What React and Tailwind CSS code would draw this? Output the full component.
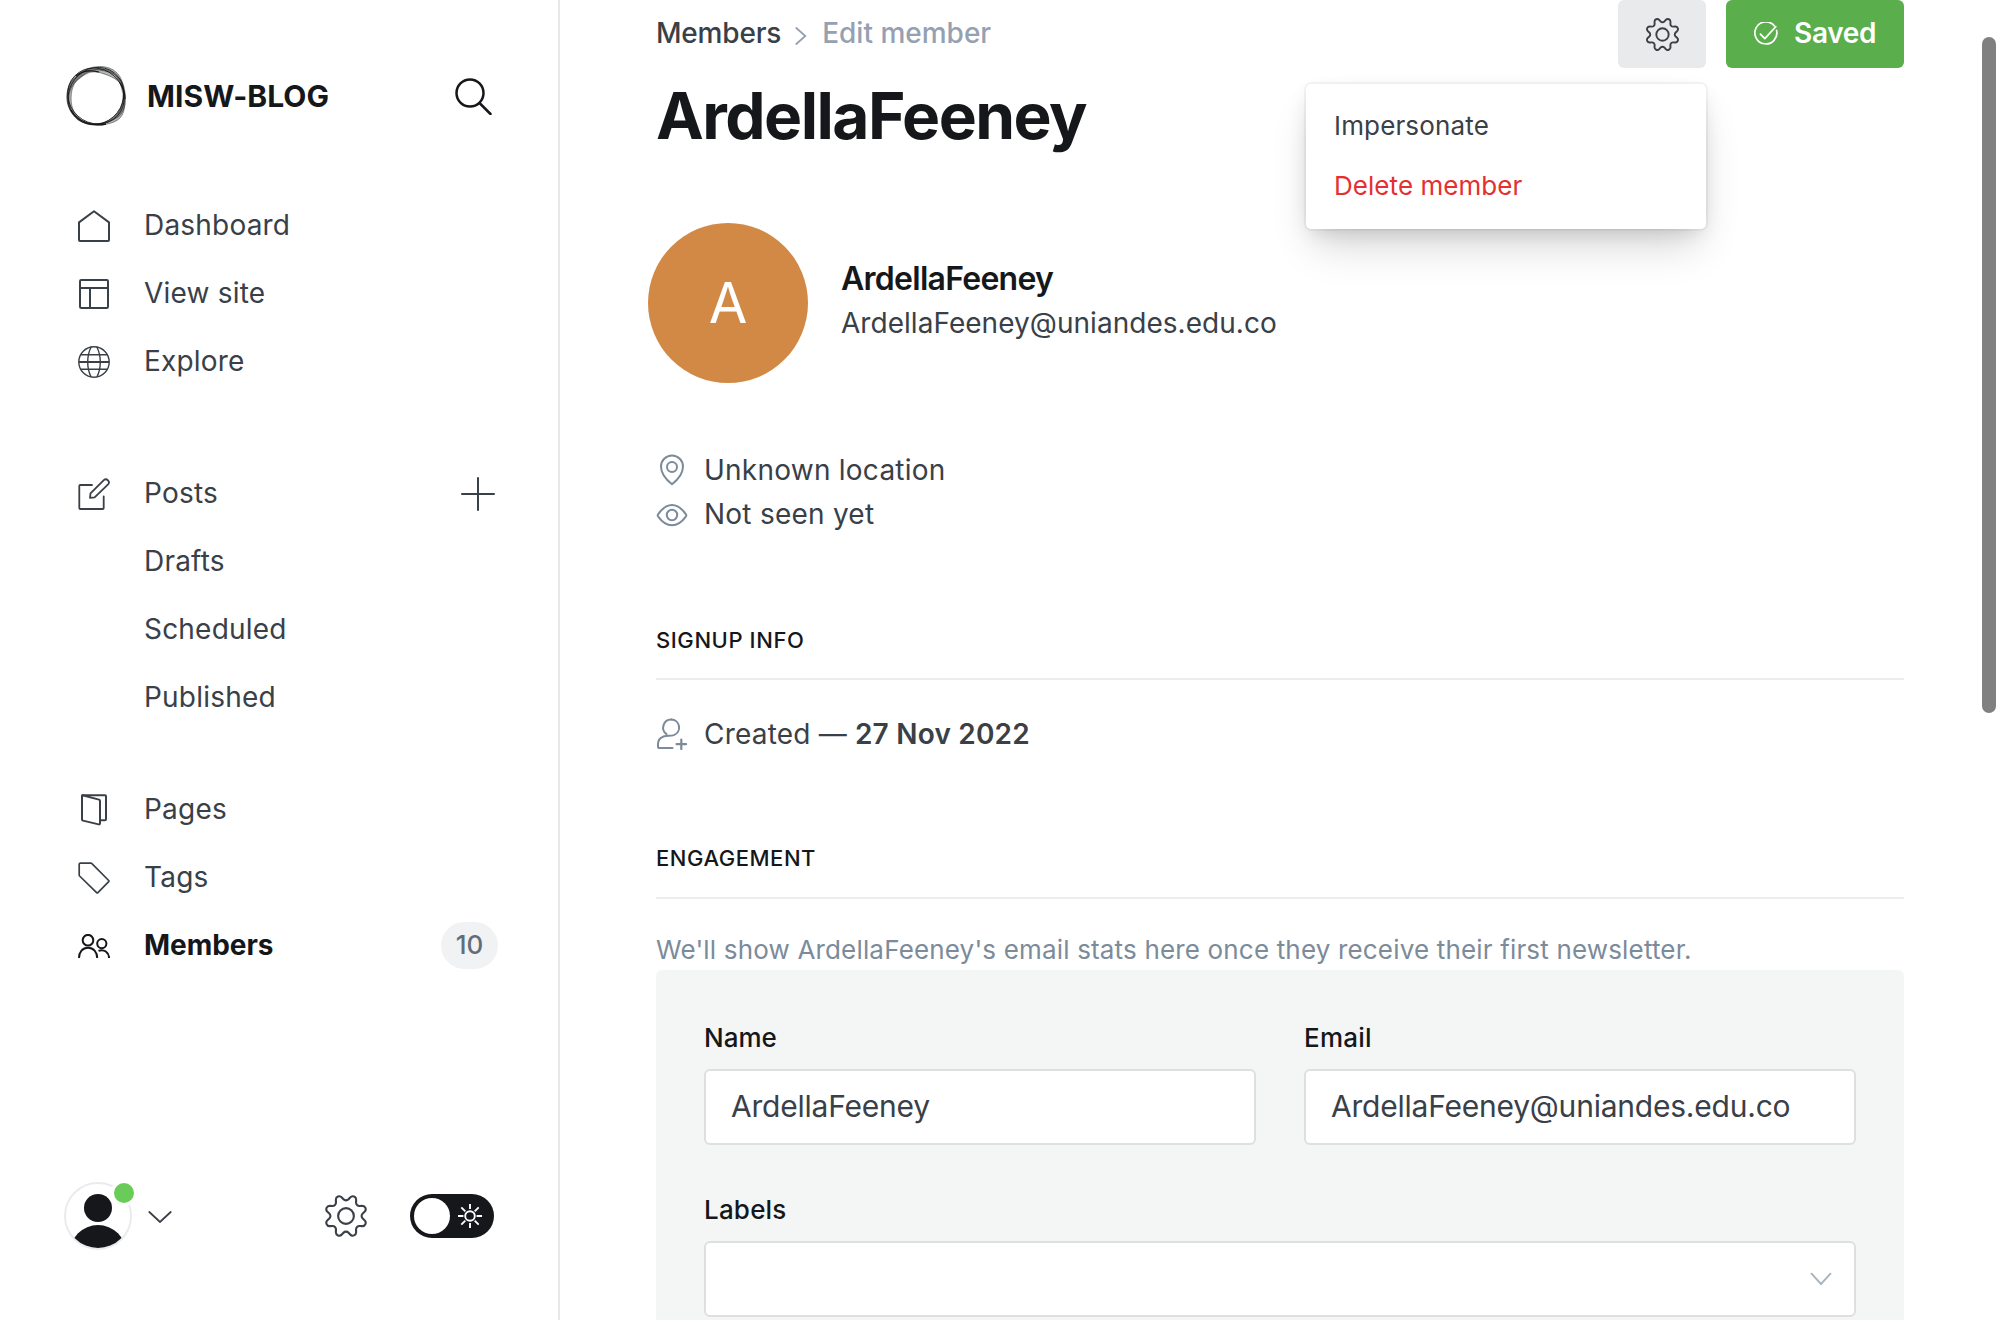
import React from "react";
import clsx from "clsx";

const GEAR =
  "M10.546,2.438a1.957,1.957,0,0,0,2.908,0L14.4,1.4a1.959,1.959,0,0,1,3.41,1.413l-.071,1.4A1.958,1.958,0,0,0,19.79,6.266l1.4-.071A1.959,1.959,0,0,1,22.6,9.606l-1.042.94a1.96,1.96,0,0,0,0,2.909l1.042.94a1.959,1.959,0,0,1-1.413,3.41l-1.4-.071a1.958,1.958,0,0,0-2.056,2.056l.071,1.4A1.959,1.959,0,0,1,14.4,22.6l-.941-1.041a1.959,1.959,0,0,0-2.908,0L9.606,22.6A1.959,1.959,0,0,1,6.2,21.192l.072-1.4a1.958,1.958,0,0,0-2.056-2.056l-1.4.071A1.958,1.958,0,0,1,1.4,14.4l1.041-.94a1.96,1.96,0,0,0,0-2.909L1.4,9.606A1.958,1.958,0,0,1,2.809,6.2l1.4.071A1.958,1.958,0,0,0,6.267,4.211L6.2,2.81A1.959,1.959,0,0,1,9.606,1.4Z";

function Svg({ w = 32, h = 32, sw = 2, className, children }) {
  return (
    <svg
      width={w}
      height={h}
      viewBox={`0 0 ${w} ${h}`}
      fill="none"
      stroke="currentColor"
      strokeWidth={sw}
      strokeLinecap="round"
      strokeLinejoin="round"
      className={clsx("shrink-0", className)}
    >
      {children}
    </svg>
  );
}

function Gear({ size, sw, r = 4.5 }) {
  return (
    <svg width={size} height={size} viewBox="0 0 24 24" fill="none" stroke="currentColor" strokeWidth={sw} strokeLinecap="round" strokeLinejoin="round">
      <path d={GEAR} />
      <circle cx="12" cy="12" r={r} />
    </svg>
  );
}

const icons = {
  home: (
    <Svg>
      <path d="M1 12.4 16 1.2l15 11.2V30a1 1 0 0 1-1 1H2a1 1 0 0 1-1-1z" />
    </Svg>
  ),
  site: (
    <Svg>
      <rect x="2" y="2" width="28" height="28" rx="1.2" />
      <path d="M2 10h28M12 10v20" strokeLinecap="butt" />
    </Svg>
  ),
  globe: (
    <Svg sw={1.4}>
      <circle cx="16" cy="16" r="15.2" />
      <path d="M13 1.2C8.6 10 8.6 22 13 30.8M19 1.2c4.400 8.800 4.400 20.800 0 29.600M2.600 8.800h26.800M2.600 23.200h26.800" />
      <path d="M1 16h30" strokeWidth="2" strokeLinecap="butt" />
    </Svg>
  ),
  posts: (
    <Svg sw={1.8}>
      <path d="M14 7H2.300a1 1 0 0 0-1 1v22a1 1 0 0 0 1 1h22.400a1 1 0 0 0 1-1V18.500" />
      <path d="M12 19.800l.5-4.400L25.800 2.100a3.050 3.050 0 0 1 4.300 4.300L16.600 19.300z" />
    </Svg>
  ),
  pages: (
    <Svg>
      <path d="M4.300 1.300H27a1 1 0 0 1 1 1v23a1 1 0 0 1-1 1h-4.400" />
      <path d="M4.600 1.300 21 5.600a1.400 1.400 0 0 1 1 1.300V29.400a1 1 0 0 1-1.300 1L5 26.600a1.300 1.300 0 0 1-1-1.200V2.200a.8.8 0 0 1 .6-.9z" />
    </Svg>
  ),
  tags: (
    <Svg sw={1.7}>
      <path d="M2.300 1.200h10.600a1.500 1.500 0 0 1 1 .4L30.700 18.500a1 1 0 0 1 0 1.200L19.900 30.700a1 1 0 0 1-1.300 0L1.600 14a1.500 1.500 0 0 1-.4-1V2.300a1 1 0 0 1 1.100-1.100z" />
    </Svg>
  ),
  members: (
    <Svg h={24} sw={2} >
      <g strokeLinecap="butt">
        <circle cx="10" cy="6.200" r="5.300" />
        <path d="M1 24C1 18 4.600 13.700 10 13.700S19.200 18 19.200 24" />
        <circle cx="23.800" cy="9.600" r="4.600" />
        <path d="M20.500 16.900C26 14.600 31 18.500 31.100 24" />
      </g>
    </Svg>
  ),
};

function NavRow({ icon, label, active, children }) {
  return (
    <div className={clsx("flex h-[68px] items-center pl-[78px]", active ? "text-[#15171a]" : "text-[#394047]")}>
      <span className="mr-[34px] flex w-8 shrink-0 pt-0.5">{icon && icons[icon]}</span>
      <span className={clsx("text-[28px] leading-none", active ? "font-bold tracking-[-0.05px]" : "tracking-[0.2px]")}>{label}</span>
      {children}
    </div>
  );
}

function Logo() {
  return (
    <svg width="62" height="62" viewBox="-31 -31 62 62" fill="none" stroke="#15171a" className="shrink-0">
      <g fill="#000" fillOpacity="0.300" fillRule="evenodd" strokeWidth="0.500" strokeOpacity="0.800">
        <path d="M-18-22C-8-30 10-33 20-24C27-18 27-10 28 0C30 12 28 22 18 26C8 30-8 31-18 24C-28 16-31 4-28-8C-26-15-23-19-18-22ZM-17-17C-8-25-2-25 5-23C15-20 24-16 27-8C29 4 26 12 20 19C12 27 0 30-10 27C-20 23-26 15-27 5C-28-4-24-12-17-17Z" />
        <path d="M-20-19C-12-26-5-27 3-26C14-25 26-20 28-9C31 4 30 14 22 21C12 28-2 30-12 26C-22 22-29 12-29 2C-29-8-26-14-20-19ZM-14-20C-6-27 8-30 17-23C24-17 25-10 27-2C27 10 23 20 13 25C4 29-9 29-17 22C-25 15-26 4-24-6C-22-13-19-17-14-20Z" />
      </g>
      <g strokeWidth="0.800">
        <ellipse rx="29.500" ry="27" transform="rotate(-52)" />
        <ellipse rx="29.200" ry="27" transform="rotate(42)" />
      </g>
      <path d="M-25 14C-18 26-4 31 10 28" strokeWidth="1.400" />
      <path d="M-20-20C-13-26-5-26 3-24" strokeWidth="1.200" />
      <path d="M24-13C28-8 29-3 29 3" strokeWidth="1.200" />
    </svg>
  );
}

function Sidebar() {
  return (
    <aside className="flex w-[560px] shrink-0 flex-col border-r-2 border-[#e6e7e8] bg-white">
      <div className="mt-[62px] flex h-[68px] items-center pl-[65px] pr-[66px]">
        <Logo />
        <span className="ml-[20px] text-[30px] font-bold leading-none tracking-[0.06px] text-[#15171a]">MISW-BLOG</span>
        <Svg w={37} h={37} sw={2.500} className="ml-auto text-[#15171a]">
          <circle cx="15" cy="15" r="13.500" />
          <path d="M25 25.500 35.500 36" />
        </Svg>
      </div>
      <nav className="mt-[61px]">
        <NavRow icon="home" label="Dashboard" />
        <NavRow icon="site" label="View site" />
        <NavRow icon="globe" label="Explore" />
      </nav>
      <nav className="mt-16">
        <NavRow icon="posts" label="Posts">
          <Svg w={34} h={34} sw={2} className="ml-auto mr-[63px] mt-0.5">
            <path d="M17 1v32M1 17h32" />
          </Svg>
        </NavRow>
        <NavRow label="Drafts" />
        <NavRow label="Scheduled" />
        <NavRow label="Published" />
      </nav>
      <nav className="mt-11">
        <NavRow icon="pages" label="Pages" />
        <NavRow icon="tags" label="Tags" />
        <NavRow icon="members" label="Members" active>
          <span className="ml-auto mr-[60px] flex h-[47px] w-[57px] items-center justify-center rounded-full bg-[#f1f2f4] text-[26px] font-medium leading-none text-[#626d79]">10</span>
        </NavRow>
      </nav>
      <div className="mt-auto mb-[70px] flex h-[68px] items-center pl-16 pr-16">
        <div className="relative">
          <svg width="68" height="68" viewBox="0 0 68 68">
            <defs>
              <clipPath id="face">
                <circle cx="34" cy="34" r="32" />
              </clipPath>
            </defs>
            <circle cx="34" cy="34" r="33" fill="#fff" stroke="#e9ecef" strokeWidth="2" />
            <g clipPath="url(#face)" fill="#15171a">
              <circle cx="34" cy="26" r="14" />
              <circle cx="34" cy="71.200" r="28.200" />
            </g>
          </svg>
          <span className="absolute -top-0.5 right-[-5px] size-[26px] rounded-full border-[3px] border-white bg-[#69cc59]" />
        </div>
        <Svg w={24} h={12} sw={1.800} className="ml-[16px] mt-0.5 text-[#394047]">
          <path d="M1.300 1 12 11 22.700 1" strokeLinejoin="miter" />
        </Svg>
        <span className="ml-auto text-[#394047]">
          <Gear size={42} sw={1.200} />
        </span>
        <div className="ml-[43px] flex h-11 w-[84px] items-center justify-between rounded-full bg-[#15171a] pl-1 pr-3">
          <span className="size-9 rounded-full bg-white" />
          <Svg w={24} h={24} sw={1.900} className="text-white">
            <circle cx="12" cy="12" r="4.800" />
            <path strokeLinecap="butt" d="M12 0v5M12 19v5M0 12h5.400M18.600 12H24M3.300 3.300l4 4M16.700 16.700l4 4M20.700 3.300l-4 4M7.300 16.700l-4 4" />
          </Svg>
        </div>
      </div>
    </aside>
  );
}

function Header() {
  return (
    <header className="relative flex h-[68px] items-start">
      <div className="flex h-[66px] items-center text-[28px] font-medium leading-none">
        <span className="tracking-[-0.2px] text-[#394047]">Members</span>
        <Svg w={12} h={18} sw={1.800} className="ml-[14px] mt-[5px] text-[#95a1b1]">
          <path d="M1.300 1 10.300 9 1.300 17" strokeLinejoin="miter" />
        </Svg>
        <span className="ml-[15px] text-[#95a1b1]">Edit member</span>
      </div>
      <button className="ml-auto flex h-[68px] w-[88px] items-center justify-center rounded-md bg-[#e9eaec] text-[#394047]">
        <Gear size={33} sw={1.400} r={4.500} />
      </button>
      <button className="ml-5 flex h-[68px] w-[178px] items-center rounded-md bg-[#5aae4b] pl-7 text-white">
        <Svg w={24} h={24} sw={1.700}>
          <path d="M20.300 3.800A11 11 0 1 0 22.600 8.400" />
          <path d="M6.400 12.200 10.800 16.600 21.800 4.600" />
        </Svg>
        <span className="mb-0.5 ml-4 text-[28px] font-semibold leading-none tracking-[-0.3px]">Saved</span>
      </button>
      <div className="absolute right-[198px] top-[84px] flex h-[145px] w-[400px] flex-col rounded-[5px] bg-white py-3 pl-7 text-[26px] text-[#394047] shadow-[0_0_0_2px_rgba(0,0,0,0.04),0_7px_20px_-5px_rgba(0,0,0,0.15),0_24px_40px_-8px_rgba(0,0,0,0.16)]">
        <span className="h-[60px] leading-[60px] tracking-[0.150px]">Impersonate</span>
        <span className="h-[60px] leading-[60px] tracking-[0.050px] text-[#e53030]">Delete member</span>
      </div>
    </header>
  );
}

function Field({ label, value, labelClass, children }) {
  return (
    <label className="flex flex-col">
      <span className={clsx("text-[26px] font-medium leading-8 text-[#15171a]", labelClass)}>{label}</span>
      <span className="mt-[15px] flex h-[76px] items-center rounded-md border-2 border-[#dddfe0] bg-white pb-0.5 pl-[25px] pr-[22px] text-[30px] leading-none tracking-[-0.220px] text-[#394047]">
        {value}
        {children}
      </span>
    </label>
  );
}

function SectionTitle({ className, children }) {
  return (
    <h3 className={clsx("border-b-2 border-[#ebecec] text-[22px] font-medium leading-8 text-[#15171a]", className)}>{children}</h3>
  );
}

export default function App() {
  return (
    <div className="relative flex h-[1320px] w-[2000px] overflow-hidden bg-white font-['Inter',sans-serif]">
      <Sidebar />
      <main className="flex min-w-0 flex-1 flex-col px-24">
        <Header />
        <h1 className="mt-[10px] text-[64px] font-bold leading-[76px] tracking-[-1.530px] text-[#15171a]">ArdellaFeeney</h1>
        <section className="-ml-2 mt-[69px] flex h-40 shrink-0">
          <div className="flex size-40 items-center justify-center rounded-full bg-[#d28945] text-[56px] leading-none text-white">A</div>
          <div className="ml-[33px] pt-[34px]">
            <div className="text-[32px] font-semibold leading-[44px] tracking-[-0.730px] text-[#15171a]">ArdellaFeeney</div>
            <div className="text-[28px] leading-[44px] tracking-[0.040px] text-[#394047]">ArdellaFeeney@uniandes.edu.co</div>
          </div>
        </section>
        <section className="mt-[65px] text-[28px] tracking-[0.240px] text-[#394047]">
          <div className="flex h-11 items-center">
            <Svg w={32} h={32} sw={2} className="mr-4 text-[#7c8b9a]">
              <path d="M16 30.300C10 25.500 5 19 5 12.500a11 11 0 0 1 22 0C27 19 22 25.500 16 30.300z" />
              <circle cx="16" cy="13" r="5" />
            </Svg>
            Unknown location
          </div>
          <div className="flex h-11 items-center">
            <Svg w={32} h={32} sw={2} className="mr-4 mt-0.5 text-[#7c8b9a]">
              <path d="M2 15.500C6 9.500 10.500 6 16 6s10 3.500 14 9.500c.4.600.4 1.200 0 1.800-4 5.500-8.500 9-14 9s-10-3.500-14-9c-.4-.6-.4-1.200 0-1.800z" />
              <circle cx="16" cy="16" r="5.200" />
            </Svg>
            Not seen yet
          </div>
        </section>
        <SectionTitle className="mt-[88px] pb-[22px] tracking-[0.580px]">SIGNUP INFO</SectionTitle>
        <div className="mt-[33px] flex h-11 items-center whitespace-pre text-[28px] tracking-[0.200px] text-[#394047]">
          <Svg w={32} h={32} sw={2} className="mr-4 text-[#7c8b9a]">
            <path d="M15.300 1.600a8 8 0 0 1 2.600 15.500c-3.600 1.100-7 .2-10.400 1.400C3.600 20 2 22.600 2 26v3a1 1 0 0 0 1 1h13.500" />
            <path d="M15.300 1.600a8 8 0 0 0-4.800 14.500" />
            <path d="M25.300 21.500v9.500M20.600 26.200h9.500" strokeWidth="2.200" />
          </Svg>
          Created — <b className="font-semibold">27 Nov 2022</b>
        </div>
        <SectionTitle className="mt-[87px] pb-[23px] tracking-[0.530px]">ENGAGEMENT</SectionTitle>
        <p className="mt-[31px] text-[26px] leading-10 tracking-[0.166px] text-[#7c8b9a]">
          We'll show ArdellaFeeney's email stats here once they receive their first newsletter.
        </p>
        <section className="flex h-[420px] shrink-0 flex-col rounded-md bg-[#f4f6f6] px-12 pt-[52px]">
          <div className="grid grid-cols-2 gap-12">
            <Field label="Name" value="ArdellaFeeney" />
            <Field label="Email" value="ArdellaFeeney@uniandes.edu.co" labelClass="tracking-[0.200px]" />
          </div>
          <div className="mt-[49px]">
            <Field label="Labels" labelClass="tracking-[0.200px]">
              <Svg w={22} h={14} sw={1.900} className="ml-auto mt-0.5 text-[#a9b4bd]">
                <path d="M1.500 1.700 11 12 20.500 1.700" strokeLinejoin="miter" />
              </Svg>
            </Field>
          </div>
        </section>
      </main>
      <div className="absolute left-[1982px] top-[37px] h-[676px] w-[14px] rounded-full bg-[#808080]" />
    </div>
  );
}
